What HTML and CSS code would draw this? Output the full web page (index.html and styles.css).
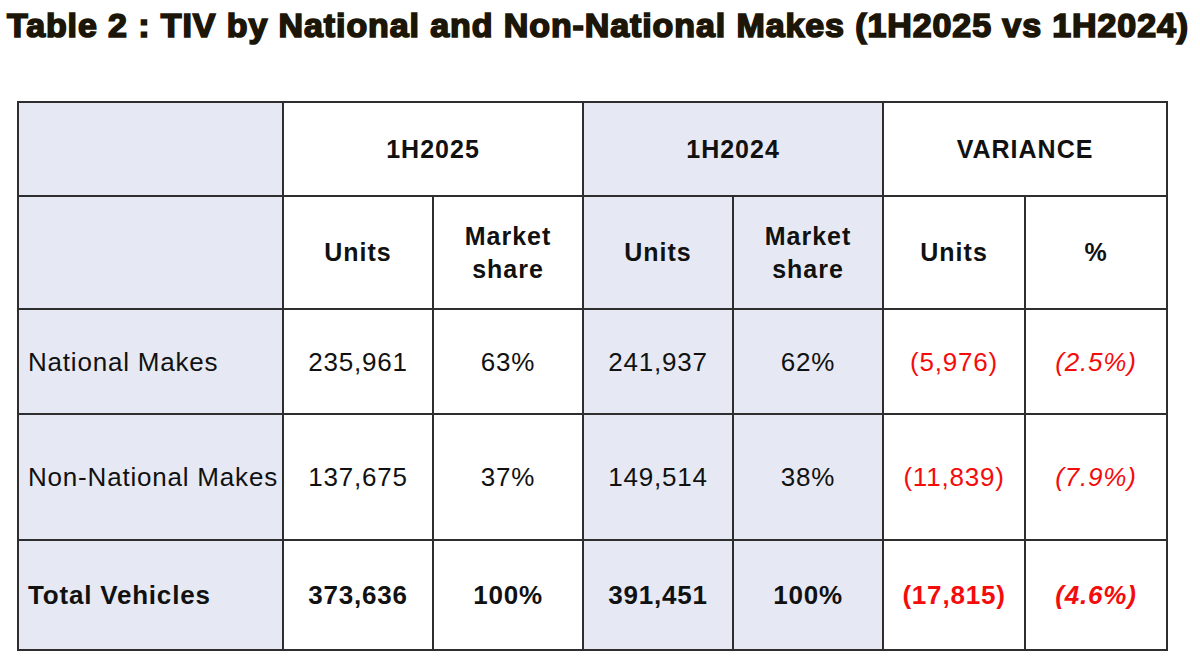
FILE: index.html
```html
<!DOCTYPE html>
<html>
<head>
<meta charset="utf-8">
<link rel="stylesheet" href="styles.css">
</head>
<body>
<h1 class="title">Table 2 : TIV by National and Non-National Makes (1H2025 vs 1H2024)</h1>
<table class="tiv">
  <colgroup>
    <col class="c-label">
    <col class="c-num"><col class="c-num">
    <col class="c-num"><col class="c-num">
    <col class="c-var"><col class="c-var">
  </colgroup>
  <tr class="r-head1">
    <th class="shade"></th>
    <th colspan="2">1H2025</th>
    <th colspan="2" class="shade">1H2024</th>
    <th colspan="2">VARIANCE</th>
  </tr>
  <tr class="r-head2">
    <th class="shade"></th>
    <th>Units</th>
    <th>Market<br>share</th>
    <th class="shade">Units</th>
    <th class="shade">Market<br>share</th>
    <th>Units</th>
    <th>%</th>
  </tr>
  <tr class="r-nat">
    <td class="shade label">National Makes</td>
    <td>235,961</td>
    <td>63%</td>
    <td class="shade">241,937</td>
    <td class="shade">62%</td>
    <td class="neg">(5,976)</td>
    <td class="neg pct">(2.5%)</td>
  </tr>
  <tr class="r-non">
    <td class="shade label">Non-National Makes</td>
    <td>137,675</td>
    <td>37%</td>
    <td class="shade">149,514</td>
    <td class="shade">38%</td>
    <td class="neg">(11,839)</td>
    <td class="neg pct">(7.9%)</td>
  </tr>
  <tr class="r-total">
    <td class="shade label">Total Vehicles</td>
    <td>373,636</td>
    <td>100%</td>
    <td class="shade">391,451</td>
    <td class="shade">100%</td>
    <td class="neg">(17,815)</td>
    <td class="neg pct">(4.6%)</td>
  </tr>
</table>
</body>
</html>
```
FILE: styles.css
```css
html, body {
  margin: 0;
  padding: 0;
  background: #ffffff;
}

body {
  font-family: "Liberation Sans", Arial, sans-serif;
  color: #111111;
}

.title {
  margin: 0 0 56px 0;
  padding: 5px 0 0 7px;
  font-size: 34px;
  line-height: 40px;
  font-weight: 700;
  letter-spacing: 0.9px;
  color: #1c1608;
  -webkit-text-stroke: 1.7px #1c1608;
  white-space: nowrap;
}

.tiv {
  margin-left: 17px;
  width: 1150px;
  border-collapse: collapse;
  table-layout: fixed;
}

.c-label { width: 265px; }
.c-num { width: 150px; }
.c-var { width: 142px; }

.tiv th,
.tiv td {
  border: 2px solid #2e2e2e;
  padding: 0;
  text-align: center;
  vertical-align: middle;
  background: #ffffff;
}

.tiv th {
  font-size: 25px;
  line-height: 33px;
  font-weight: 700;
  letter-spacing: 1px;
  color: #111111;
}

.tiv td {
  font-size: 26px;
  line-height: 32px;
  letter-spacing: 0.8px;
  color: #111111;
}

.tiv .shade {
  background: #e6e9f3;
}

.tiv td.label {
  text-align: left;
  padding-left: 9px;
  white-space: nowrap;
}

.tiv td.neg {
  color: #f40c0c;
}

.tiv td.pct {
  font-style: italic;
}

.r-head1 { height: 94px; }
.r-head2 { height: 113px; }
.r-nat { height: 105px; }
.r-non { height: 126px; }
.r-total { height: 110px; }

.r-total td {
  font-weight: 700;
}
```
